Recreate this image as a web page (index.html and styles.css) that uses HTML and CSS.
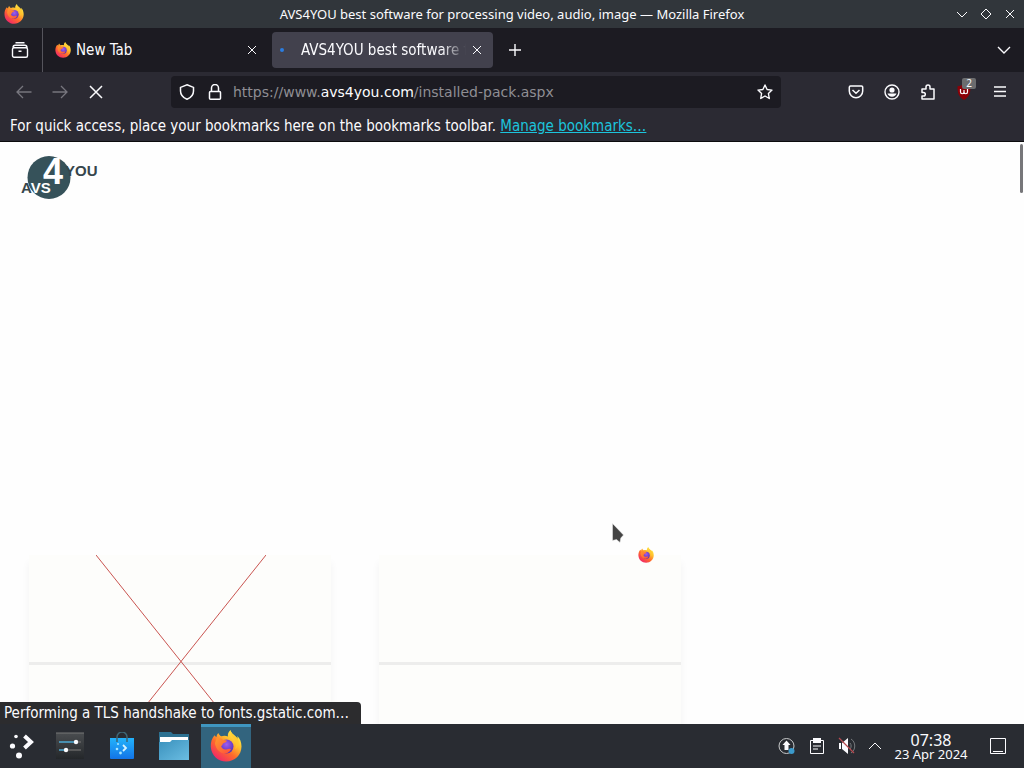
FILE: index.html
```html
<!DOCTYPE html>
<html lang="en">
<head>
<meta charset="utf-8">
<title>AVS4YOU best software for processing video, audio, image — Mozilla Firefox</title>
<link rel="stylesheet" href="styles.css">
</head>
<body>
<svg class="defs" width="0" height="0" aria-hidden="true">
  <defs>
    <linearGradient id="flame" x1="0.85" y1="0.1" x2="0.2" y2="0.95">
      <stop offset="0" stop-color="#fff04a"/><stop offset=".3" stop-color="#ffbd2e"/><stop offset=".6" stop-color="#ff6a2b"/><stop offset="1" stop-color="#f0246b"/>
    </linearGradient>
    <radialGradient id="globe" cx=".5" cy=".35" r=".7">
      <stop offset="0" stop-color="#a05cf0"/><stop offset="1" stop-color="#4b2db0"/>
    </radialGradient>
    <linearGradient id="wave" x1="0" y1="0" x2="1" y2="1">
      <stop offset="0" stop-color="#ff9a2c"/><stop offset="1" stop-color="#ff4f3c"/>
    </linearGradient>
    <symbol id="firefox" viewBox="0 0 32 32">
      <path fill="url(#flame)" d="M20.5 0c-2 2-3 4-2.600 6.500-2-.9-4.500-.9-6.500-.2C9.800 5.600 8.700 4.200 8.400 3 7 4.200 6.600 5.600 6.500 7.100c-.7-.3-1.700-1-2-1.800C1.800 8.500.5 12.500.8 17c.6 8.500 7.200 14.500 15.400 14.500 8.600 0 15.200-6.600 15.300-15 0-4.500-1.500-8-4.300-10.600.4 1.300.5 2.200.4 3.200C25.700 5 21.500 4.200 20.500 0z"/>
      <circle fill="url(#globe)" cx="16.500" cy="16.500" r="7"/>
      <path fill="url(#wave)" d="M6.500 8.500c2.500-1 5-.4 6.500 1.500 1.600-.2 3 .2 4 .8-.6 1.600-2.700 2.200-4 2.600-.5 1.200-.8 2.200-1.900 2.700.7 2.800 3 4 5.400 3.300 1.700-.5 2.900-1 4.500-.2-1.500 3.200-4.500 4.800-7.800 4C8.500 22.200 5.300 17.500 5 13z"/>
      <path fill="#ffc52e" d="M20.500 1c0 3 1.200 5 3.200 7.200 2.600 2.900 3.200 7.200 1.200 11.300 4.300-3 4.900-8.600 2.300-12C24.800 6.500 21.800 4.800 20.500 1z" opacity=".75"/>
    </symbol>
    <linearGradient id="bag" x1="0" y1="0" x2="0" y2="1"><stop offset="0" stop-color="#23b3fb"/><stop offset="1" stop-color="#1274e8"/></linearGradient>
    <linearGradient id="fold" x1="0" y1="0" x2="1" y2="1"><stop offset="0" stop-color="#3a91bd"/><stop offset="1" stop-color="#6bbde2"/></linearGradient>
    <linearGradient id="panel" x1="0" y1="0" x2="0" y2="1"><stop offset="0" stop-color="#4a4d50"/><stop offset="1" stop-color="#24272a"/></linearGradient>
  </defs>
</svg>

<header class="titlebar">
  <svg class="app-icon" width="20" height="20"><use href="#firefox"/></svg>
  <h1 class="window-title">AVS4YOU best software for processing video, audio, image — Mozilla Firefox</h1>
  <div class="window-controls">
    <button class="bare" aria-label="Minimize"><svg width="12" height="12" viewBox="0 0 12 12"><path d="M1 4l5 5 5-5"/></svg></button>
    <button class="bare" aria-label="Maximize"><svg width="12" height="12" viewBox="0 0 12 12"><path d="M6 1l5 5-5 5-5-5z"/></svg></button>
    <button class="bare" aria-label="Close window"><svg width="12" height="12" viewBox="0 0 12 12"><path d="M2 2l8 8M10 2l-8 8"/></svg></button>
  </div>
</header>

<nav class="tabstrip" aria-label="Tabs">
  <button class="bare view" aria-label="Firefox View"><svg width="18" height="18" viewBox="0 0 18 18"><path stroke-width="1.400" d="M4.500 1.700h9M2 6.500c0-1.500.8-2.300 2.300-2.300h9.400c1.500 0 2.300.8 2.300 2.300M3 6.700h12a1.500 1.500 0 0 1 1.500 1.500v6.600a1.500 1.500 0 0 1-1.500 1.500H3a1.500 1.500 0 0 1-1.500-1.500V8.200A1.500 1.500 0 0 1 3 6.700zM7.500 10.200h3"/></svg></button>
  <div class="tab">
    <svg class="tab-icon" width="16" height="16"><use href="#firefox"/></svg>
    <button class="bare tab-label">New Tab</button>
    <button class="bare" aria-label="Close New Tab"><svg width="10" height="10" viewBox="0 0 10 10"><path d="M1 1l8 8M9 1l-8 8"/></svg></button>
  </div>
  <div class="tab active">
    <span class="loading-dot"></span>
    <button class="bare tab-label fade">AVS4YOU best software for</button>
    <button class="bare" aria-label="Close AVS4YOU"><svg width="10" height="10" viewBox="0 0 10 10"><path d="M1 1l8 8M9 1l-8 8"/></svg></button>
  </div>
  <button class="bare new-tab" aria-label="New tab"><svg width="14" height="14" viewBox="0 0 14 14"><path stroke-width="1.400" d="M7 1v12M1 7h12"/></svg></button>
  <button class="bare all-tabs" aria-label="List all tabs"><svg width="14" height="14" viewBox="0 0 14 14"><path stroke-width="1.400" d="M1 4l6 6 6-6"/></svg></button>
</nav>

<div class="toolbar">
  <div class="nav-buttons">
    <button class="bare dim" aria-label="Back"><svg width="16" height="16" viewBox="0 0 16 16"><path stroke-width="1.300" d="M15.500 8H1.500M7 2L1 8l6 6"/></svg></button>
    <button class="bare dim" aria-label="Forward"><svg width="16" height="16" viewBox="0 0 16 16"><path stroke-width="1.300" d="M.5 8h14M9 2l6 6-6 6"/></svg></button>
    <button class="bare" aria-label="Stop"><svg width="16" height="16" viewBox="0 0 16 16"><path stroke-width="1.500" d="M2 2l12 12M14 2L2 14"/></svg></button>
  </div>
  <div class="urlbar">
    <button class="bare" aria-label="Tracking protection"><svg width="16" height="16" viewBox="0 0 16 16"><path stroke-width="1.500" d="M8 .8l6.500 2.600v3.500c0 3.700-2.400 6.600-6.500 8.400-4.100-1.800-6.500-4.700-6.500-8.400V3.400z"/></svg></button>
    <button class="bare" aria-label="Site information"><svg width="16" height="16" viewBox="0 0 16 16"><path stroke-width="1.500" d="M4.500 7.500V4a3.500 3.500 0 0 1 7 0v3.500M3.500 7.500h9a1 1 0 0 1 1 1v5.700a1 1 0 0 1-1 1h-9a1 1 0 0 1-1-1V8.500a1 1 0 0 1 1-1z"/></svg></button>
    <div class="url" role="textbox" contenteditable="true" spellcheck="false" aria-label="Address">https://www.<span class="host">avs4you.com</span>/installed-pack.aspx</div>
    <button class="bare" aria-label="Bookmark this page"><svg width="16" height="16" viewBox="0 0 16 16"><path stroke-width="1.400" stroke-linejoin="round" d="M8 1l2.100 4.500 4.900.6-3.600 3.400.9 5L8 12l-4.300 2.500.9-5L1 6.100l4.900-.6z"/></svg></button>
  </div>
  <div class="tools">
    <button class="bare" aria-label="Save to Pocket"><svg width="16" height="16" viewBox="0 0 16 16"><path stroke-width="1.500" d="M2.500 2h11a1.200 1.200 0 0 1 1.200 1.200V7A6.700 6.700 0 0 1 1.300 7V3.200A1.200 1.200 0 0 1 2.500 2zM4.500 6L8 9.300 11.500 6"/></svg></button>
    <button class="bare" aria-label="Account"><svg width="16" height="16" viewBox="0 0 16 16"><circle cx="8" cy="8" r="7" stroke-width="1.400"/><circle class="solid" cx="8" cy="6" r="2.600"/><path class="solid" d="M3.500 9.500h9c-.5 2-2.300 3.200-4.500 3.200s-4-1.200-4.500-3.200z"/></svg></button>
    <button class="bare" aria-label="Extensions"><svg width="16" height="16" viewBox="0 0 16 16"><path stroke-width="1.500" stroke-linejoin="round" d="M2 5h4V3a2 2 0 0 1 4 0v2h4v10H2v-3h1.500a1.800 1.800 0 0 0 0-3.600H2z"/></svg></button>
    <button class="bare ublock" aria-label="uBlock Origin"><svg width="16" height="16" viewBox="0 0 16 16"><path fill="#8b0008" stroke="none" d="M8 0c2 1.500 4 2 6.500 2.200C14.500 9 13.500 12.500 8 16 2.500 12.500 1.500 9 1.500 2.200 4 2 6 1.500 8 0z"/><path stroke-width="1.200" d="M4.500 5v3a1.700 1.700 0 0 0 3.500 0V6v2a1.700 1.700 0 0 0 3.500 0V5"/></svg><span class="badge">2</span></button>
    <button class="bare" aria-label="Open menu"><svg width="16" height="16" viewBox="0 0 16 16"><path stroke-width="1.400" d="M2 3h12M2 7.500h12M2 12h12"/></svg></button>
  </div>
</div>

<div class="bookmarks">For quick access, place your bookmarks here on the bookmarks toolbar. <a href="#manage">Manage bookmarks…</a></div>

<main class="page">
  <a class="logo" href="#home" aria-label="AVS4YOU">
    <svg width="80" height="46" viewBox="0 0 80 46">
      <circle cx="28" cy="22.500" r="21.500"/>
      <text class="logo-text" x="0" y="38">A<tspan class="light">VS</tspan></text>
      <text class="logo-four" x="22" y="29">4</text>
      <text class="logo-text" x="44" y="21">YOU</text>
    </svg>
  </a>
  <div class="cards">
    <section class="card">
      <div class="card-head"></div>
      <svg class="cross" width="170" height="213" viewBox="0 0 170 213"><path d="M0 0l170 213M170 0L0 213"/></svg>
    </section>
    <section class="card"><div class="card-head"></div></section>
  </div>
  <div class="scroll-thumb"></div>
  <svg class="pointer" width="12" height="20" viewBox="0 0 12 20"><path d="M.5.500v17l4-1 3.500 3 .8-4.500 2.700-3z"/></svg>
  <svg class="busy" width="16" height="16"><use href="#firefox"/></svg>
  <div class="status" role="status">Performing a TLS handshake to fonts.gstatic.com…</div>
</main>

<footer class="taskbar">
  <div class="launchers">
    <button class="bare task" aria-label="Application launcher"><svg width="26" height="28" viewBox="0 0 26 28"><g class="solid"><circle cx="7" cy="4.500" r="1.800"/><circle cx="3.500" cy="14" r="2.600"/><circle cx="10" cy="23.500" r="3"/></g><path stroke-width="4" d="M15.500 4l6.500 6-6.500 6"/></svg></button>
    <button class="bare task" aria-label="System settings"><svg width="28" height="28" viewBox="0 0 28 28"><path fill="url(#panel)" stroke="none" d="M0 1h28v26H0z"/><path stroke="#777" d="M0 1h28"/><path stroke="#4dabd5" stroke-width="1.500" d="M3 10h17M3 18h7"/><path stroke="#666" stroke-width="1.500" d="M10 18h15M20 10h5"/><circle class="solid" cx="20" cy="10" r="2.200"/><circle class="solid" cx="10" cy="18" r="2.200"/></svg></button>
    <button class="bare task" aria-label="Discover"><svg width="26" height="28" viewBox="0 0 26 28"><path fill="url(#bag)" stroke="none" d="M1 6h24v20a1 1 0 0 1-1 1H2a1 1 0 0 1-1-1z"/><path stroke="#3d6675" stroke-width="1.500" d="M8 10V5a5 5 0 0 1 10 0v5"/><g fill="#a7e6ff" stroke="none"><circle cx="9" cy="12" r="1"/><circle cx="8" cy="17" r="1.300"/><circle cx="11.500" cy="21" r="1.400"/></g><path stroke="#d5f3ff" stroke-width="1.800" d="M14 13l3 3-3 3"/></svg></button>
    <button class="bare task" aria-label="Files"><svg width="30" height="28" viewBox="0 0 30 28"><path fill="#2d7191" stroke="none" d="M0 0h12l2 2h16v14H0z"/><path fill="#fff" stroke="none" d="M1 5h28v8H1z"/><path fill="url(#fold)" stroke="none" d="M0 10h11l2-2h17v20H0z"/></svg></button>
    <button class="bare task current" aria-label="Firefox"><svg width="32" height="32"><use href="#firefox"/></svg></button>
  </div>
  <div class="tray">
    <button class="bare" aria-label="Updates"><svg width="18" height="18" viewBox="0 0 18 18"><circle cx="8.500" cy="9" r="7.500" stroke="#c8cacb"/><path class="solid" d="M8.500 3.500l4 4.500h-2v5h-4V8h-2z"/><circle cx="13.500" cy="14" r="3" fill="#3b9acb" stroke="none"/></svg></button>
    <button class="bare" aria-label="Clipboard"><svg width="18" height="18" viewBox="0 0 18 18"><path d="M2.500 3.500h13v13h-13zM5 9h8M5 12h5"/><path class="solid" d="M5 1h8v5H5z"/></svg></button>
    <button class="bare" aria-label="Volume muted"><svg width="18" height="18" viewBox="0 0 18 18"><path class="solid" d="M1 6h2v6H1zM4 6l6-5v16l-6-5z"/><path stroke="#777a7d" d="M12 6c1.500 1.500 1.500 4.500 0 6M13 2c5 3 5 11 0 14"/><path stroke="#b64a50" stroke-width="1.300" d="M1 1l15 15"/></svg></button>
    <button class="bare" aria-label="Show hidden icons"><svg width="14" height="14" viewBox="0 0 14 14"><path d="M1 10l6-6 6 6"/></svg></button>
  </div>
  <time class="clock" datetime="2024-04-23T07:38"><span class="hour">07:38</span><span class="date">23 Apr 2024</span></time>
  <button class="bare desktop" aria-label="Show desktop"><svg width="18" height="18" viewBox="0 0 18 18"><path d="M1.500 1.500h15v15h-15zM4 14.500h10"/></svg></button>
</footer>
</body>
</html>
```
FILE: styles.css
```css
* { box-sizing: border-box; }

body {
  margin: 0;
  height: 100vh;
  display: flex;
  flex-direction: column;
  overflow: hidden;
  font: 13px/20px "Noto Sans", sans-serif;
  color: #fbfbfe;
  background: #fff;
}

.defs { position: absolute; }

.bare {
  display: flex;
  align-items: center;
  justify-content: center;
  padding: 0;
  border: 0;
  background: none;
  color: inherit;
  font: inherit;
}

svg { display: block; flex: none; fill: none; stroke: currentColor; }
svg use { stroke: none; }
.solid { fill: currentColor; stroke: none; }

.titlebar {
  display: grid;
  grid-template-columns: 74px 1fr 74px;
  align-items: center;
  height: 28px;
  background: #31363b;
}
.app-icon { margin-left: 4px; }
.window-title { margin: 0; font-size: 13px; font-weight: 400; text-align: center; white-space: nowrap; }
.window-controls { display: grid; grid-template-columns: repeat(3, 24px); }

.tabstrip {
  display: flex;
  align-items: center;
  height: 44px;
  background: #1c1b22;
}
.view { width: 43px; height: 44px; padding-right: 2px; border-right: 1px solid #55545c; }
.tab {
  display: flex;
  align-items: center;
  flex: 0 1 221px;
  min-width: 0;
  height: 36px;
  margin: 0 4px;
  padding: 0 11px 0 8px;
  border-radius: 4px;
}
.active { margin: 0; background: #42414d; }
.tab-icon { margin-right: 5px; }
.tab-label,
.bookmarks,
.status {
  font: condensed 15px/20px "DejaVu Sans Condensed", "DejaVu Sans", sans-serif;
  white-space: nowrap;
}
.tab-label {
  flex: 1;
  min-width: 0;
  justify-content: flex-start;
  overflow: hidden;
}
.fade { margin-right: 6px; mask-image: linear-gradient(to right, #000 85%, transparent); }
.loading-dot { width: 4px; height: 4px; margin-right: 17px; border-radius: 50%; background: #2b7de0; }
.new-tab { width: 44px; height: 36px; }
.all-tabs { width: 40px; height: 36px; margin-left: auto; }

.toolbar {
  display: flex;
  align-items: center;
  height: 40px;
  padding: 0 6px;
  background: #2b2a33;
}
.nav-buttons, .tools { display: flex; }
.nav-buttons .bare, .tools .bare { width: 36px; height: 32px; }
.dim { color: #77767e; }
.urlbar {
  display: flex;
  align-items: center;
  flex: 1;
  height: 32px;
  margin: 0 57px;
  padding: 0 8px;
  gap: 12px;
  border-radius: 4px;
  background: #1c1b22;
}
.url {
  flex: 1;
  margin-left: -2px;
  overflow: hidden;
  outline: 0;
  color: #8f8e94;
  font: 14px/20px "DejaVu Sans", sans-serif;
  white-space: nowrap;
}
.host { color: #fbfbfe; }
.ublock { position: relative; }
.badge {
  position: absolute;
  top: 2px;
  right: 6px;
  width: 14px;
  border-radius: 2px;
  background: #6b6c6e;
  font-size: 10px;
  line-height: 11px;
}

.bookmarks {
  height: 30px;
  padding: 4px 10px;
  border-bottom: 1px solid #0c0c0d;
  background: #2b2a33;
}
.bookmarks a { color: #1cc4dc; }

.page {
  position: relative;
  display: flex;
  flex-direction: column;
  flex: 1;
  min-height: 0;
  padding: 13px 29px 0 21px;
  overflow: hidden;
  background: #fefefe;
}
.logo { align-self: flex-start; }
.logo circle { fill: #36525a; stroke: none; }
.logo text { font-family: "Liberation Sans", Arial, sans-serif; font-weight: 700; stroke: none; }
.logo-text { font-size: 15px; fill: #36464c; }
.logo-four { font-size: 36px; fill: #fff; }
.light { fill: #fff; }
.cards {
  display: grid;
  grid-template-columns: repeat(2, 302px);
  gap: 48px;
  margin: auto 0 0 8px;
}
.card {
  position: relative;
  height: 169px;
  background: #fdfdfb;
  box-shadow: 0 8px 8px rgba(0, 0, 0, .05);
}
.card-head { height: 110px; border-bottom: 3px solid #ededec; }
.cross { position: absolute; top: 0; left: 67px; stroke: #c95450; }
.scroll-thumb { position: absolute; top: 2px; right: 1px; width: 3px; height: 49px; border-radius: 2px; background: #77777a; }
.pointer { position: absolute; top: 381px; left: 612px; fill: #444; stroke: #eee; stroke-width: .5; }
.busy { position: absolute; top: 405px; left: 638px; }
.status {
  position: absolute;
  bottom: 0;
  left: 0;
  padding: 1px 12px 1px 4px;
  border-top-right-radius: 4px;
  background: #2c2c2e;
}

.taskbar {
  display: flex;
  align-items: center;
  height: 44px;
  background: #292c32;
}
.launchers { display: flex; gap: 2px; margin-right: auto; }
.task { width: 50px; height: 44px; }
.task:first-child { width: 43px; }
.current { border-top: 3px solid #3f96c0; background: #32647e; }
.current svg { margin-bottom: 4px; }
.tray { display: flex; align-items: center; gap: 12px; }
.clock { display: flex; flex-direction: column; width: 98px; text-align: center; }
.hour { font-size: 16px; line-height: 16px; }
.date { font-size: 13px; line-height: 13px; }
.desktop { width: 44px; height: 44px; padding-right: 8px; }
```
